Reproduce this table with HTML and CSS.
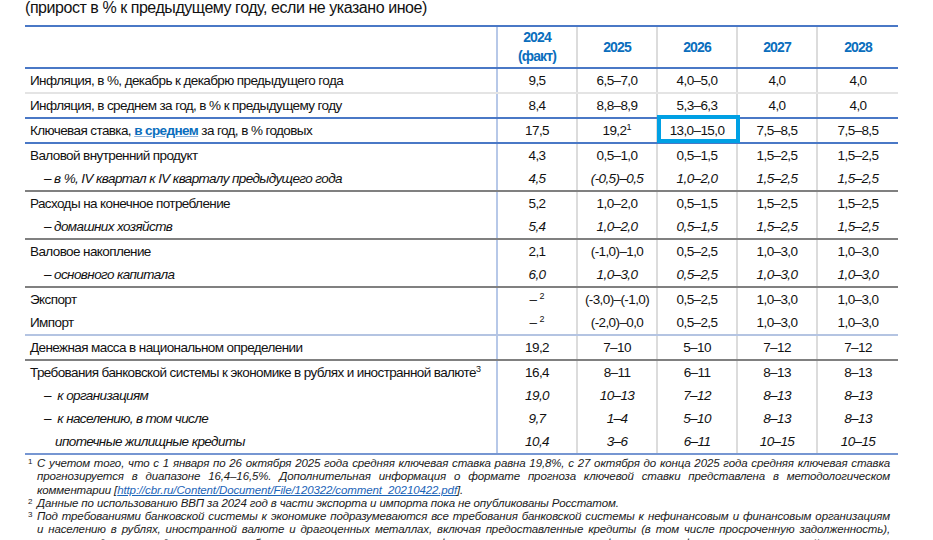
FILE: index.html
```html
<!DOCTYPE html>
<html lang="ru">
<head>
<meta charset="utf-8">
<title>Прогноз</title>
<link rel="stylesheet" href="styles.css">
</head>
<body>
<div class="page">
  <p class="title">(прирост в % к предыдущему году, если не указано иное)</p>
  <div class="table">
    <div class="row head b-blue">
      <div class="cell label"></div>
      <div class="cell year">2024<br>(факт)</div>
      <div class="cell year">2025</div>
      <div class="cell year">2026</div>
      <div class="cell year">2027</div>
      <div class="cell year">2028</div>
    </div>

    <div class="group b-light">
      <div class="row">
        <div class="cell label">Инфляция, в %, декабрь к декабрю предыдущего года</div>
        <div class="cell">9,5</div><div class="cell">6,5–7,0</div><div class="cell">4,0–5,0</div><div class="cell">4,0</div><div class="cell">4,0</div>
      </div>
    </div>

    <div class="group b-blue">
      <div class="row">
        <div class="cell label">Инфляция, в среднем за год, в % к предыдущему году</div>
        <div class="cell">8,4</div><div class="cell">8,8–8,9</div><div class="cell">5,3–6,3</div><div class="cell">4,0</div><div class="cell">4,0</div>
      </div>
    </div>

    <div class="group b-blue">
      <div class="row">
        <div class="cell label">Ключевая ставка, <a class="link" href="#">в среднем</a> за год, в % годовых</div>
        <div class="cell">17,5</div><div class="cell">19,2<sup>1</sup></div><div class="cell hl">13,0–15,0</div><div class="cell">7,5–8,5</div><div class="cell">7,5–8,5</div>
      </div>
    </div>

    <div class="group b-gray">
      <div class="row">
        <div class="cell label">Валовой внутренний продукт</div>
        <div class="cell">4,3</div><div class="cell">0,5–1,0</div><div class="cell">0,5–1,5</div><div class="cell">1,5–2,5</div><div class="cell">1,5–2,5</div>
      </div>
      <div class="row it">
        <div class="cell label sub">– в %, IV квартал к IV кварталу предыдущего года</div>
        <div class="cell">4,5</div><div class="cell">(-0,5)–0,5</div><div class="cell">1,0–2,0</div><div class="cell">1,5–2,5</div><div class="cell">1,5–2,5</div>
      </div>
    </div>

    <div class="group b-gray">
      <div class="row">
        <div class="cell label">Расходы на конечное потребление</div>
        <div class="cell">5,2</div><div class="cell">1,0–2,0</div><div class="cell">0,5–1,5</div><div class="cell">1,5–2,5</div><div class="cell">1,5–2,5</div>
      </div>
      <div class="row it">
        <div class="cell label sub">– домашних хозяйств</div>
        <div class="cell">5,4</div><div class="cell">1,0–2,0</div><div class="cell">0,5–1,5</div><div class="cell">1,5–2,5</div><div class="cell">1,5–2,5</div>
      </div>
    </div>

    <div class="group b-gray">
      <div class="row">
        <div class="cell label">Валовое накопление</div>
        <div class="cell">2,1</div><div class="cell">(-1,0)–1,0</div><div class="cell">0,5–2,5</div><div class="cell">1,0–3,0</div><div class="cell">1,0–3,0</div>
      </div>
      <div class="row it">
        <div class="cell label sub">– основного капитала</div>
        <div class="cell">6,0</div><div class="cell">1,0–3,0</div><div class="cell">0,5–2,5</div><div class="cell">1,0–3,0</div><div class="cell">1,0–3,0</div>
      </div>
    </div>

    <div class="group b-pale">
      <div class="row">
        <div class="cell label">Экспорт</div>
        <div class="cell">– <sup>2</sup></div><div class="cell">(-3,0)–(-1,0)</div><div class="cell">0,5–2,5</div><div class="cell">1,0–3,0</div><div class="cell">1,0–3,0</div>
      </div>
      <div class="row">
        <div class="cell label">Импорт</div>
        <div class="cell">– <sup>2</sup></div><div class="cell">(-2,0)–0,0</div><div class="cell">0,5–2,5</div><div class="cell">1,0–3,0</div><div class="cell">1,0–3,0</div>
      </div>
    </div>

    <div class="group b-gray">
      <div class="row">
        <div class="cell label">Денежная масса в национальном определении</div>
        <div class="cell">19,2</div><div class="cell">7–10</div><div class="cell">5–10</div><div class="cell">7–12</div><div class="cell">7–12</div>
      </div>
    </div>

    <div class="group b-mid">
      <div class="row">
        <div class="cell label">Требования банковской системы к экономике в рублях и иностранной валюте<sup>3</sup></div>
        <div class="cell">16,4</div><div class="cell">8–11</div><div class="cell">6–11</div><div class="cell">8–13</div><div class="cell">8–13</div>
      </div>
      <div class="row it">
        <div class="cell label sub">–&nbsp;&nbsp;к организациям</div>
        <div class="cell">19,0</div><div class="cell">10–13</div><div class="cell">7–12</div><div class="cell">8–13</div><div class="cell">8–13</div>
      </div>
      <div class="row it">
        <div class="cell label sub">–&nbsp;&nbsp;к населению, в том числе</div>
        <div class="cell">9,7</div><div class="cell">1–4</div><div class="cell">5–10</div><div class="cell">8–13</div><div class="cell">8–13</div>
      </div>
      <div class="row it">
        <div class="cell label sub2">ипотечные жилищные кредиты</div>
        <div class="cell">10,4</div><div class="cell">3–6</div><div class="cell">6–11</div><div class="cell">10–15</div><div class="cell">10–15</div>
      </div>
    </div>
  </div>

  <div class="notes">
    <div class="note">
      <span class="num">1</span>
      <p class="text">С учетом того, что с 1 января по 26 октября 2025 года средняя ключевая ставка равна 19,8%, с 27 октября до конца 2025 года средняя ключевая ставка прогнозируется в диапазоне 16,4–16,5%. Дополнительная информация о формате прогноза ключевой ставки представлена в методологическом комментарии [<a class="nlink" href="#">http://cbr.ru/Content/Document/File/120322/comment_20210422.pdf</a>].</p>
    </div>
    <div class="note">
      <span class="num">2</span>
      <p class="text">Данные по использованию ВВП за 2024 год в части экспорта и импорта пока не опубликованы Росстатом.</p>
    </div>
    <div class="note">
      <span class="num">3</span>
      <p class="text">Под требованиями банковской системы к экономике подразумеваются все требования банковской системы к нефинансовым и финансовым организациям и&nbsp;населению в рублях, иностранной валюте и драгоценных металлах, включая предоставленные кредиты (в том числе просроченную задолженность), вложения в долговые и долевые ценные бумаги и векселя, а также прочие формы участия в капитале нефинансовых и финансовых организаций.</p>
    </div>
  </div>
</div>
</body>
</html>
```

FILE: styles.css
```css
* { box-sizing: border-box; }

html, body {
  margin: 0;
  padding: 0;
  background: #ffffff;
}

body {
  font-family: "Liberation Sans", Arial, sans-serif;
  color: #111111;
  overflow: hidden;
}

.page {
  width: 933px;
  height: 540px;
  padding-left: 25px;
  overflow: hidden;
}

.title {
  margin: 0 0 9px 0;
  font-size: 16px;
  line-height: 16px;
  letter-spacing: -0.45px;
  color: #111111;
}

.table {
  width: 873px;
  border-top: 2px solid #4a78c6;
}

.row {
  display: grid;
  grid-template-columns: 473px repeat(5, 80px);
  height: 23px;
}

.row.head {
  height: 42px;
}

.cell {
  font-size: 13.5px;
  line-height: 23px;
  letter-spacing: -0.6px;
  text-align: center;
  white-space: nowrap;
  border-right: 2px solid #dcdcdc;
}

.cell:last-child {
  border-right: none;
}

.cell.label {
  text-align: left;
  padding-left: 5px;
  letter-spacing: -0.6px;
  border-right-color: #b7c8e8;
}

.cell.year {
  font-size: 14px;
  font-weight: bold;
  color: #0a6ebd;
  line-height: 19px;
  letter-spacing: -0.9px;
  display: flex;
  align-items: center;
  justify-content: center;
}

.it .cell {
  font-style: italic;
}

.cell.sub {
  padding-left: 19px;
}

.cell.sub2 {
  padding-left: 30px;
}

.link {
  color: #0a6ebd;
  font-weight: bold;
  text-decoration: underline;
  text-decoration-color: #8fb3dc;
}

sup {
  font-size: 9px;
  line-height: 0;
  vertical-align: 5px;
  letter-spacing: 0;
}

.hl {
  position: relative;
}

.hl::after {
  content: "";
  position: absolute;
  top: -4px;
  bottom: -1px;
  left: -1px;
  right: -4px;
  border: 4px solid #00a0e4;
}

.b-blue { border-bottom: 2px solid #4a78c6; }
.b-light { border-bottom: 2px solid #e4e4e4; }
.b-gray { border-bottom: 2px solid #808080; }
.b-pale { border-bottom: 2px solid #b4c4e2; }
.b-mid { border-bottom: 2px solid #7696d2; }

.notes {
  margin-top: 2px;
  width: 865px;
  font-size: 11.5px;
  line-height: 13.3px;
  letter-spacing: -0.12px;
  font-style: italic;
  color: #1a1a1a;
}

.note {
  display: flex;
}

.num {
  flex: 0 0 12px;
  padding-left: 3px;
  font-size: 8px;
  line-height: 10px;
  font-style: normal;
  letter-spacing: 0;
}

.text {
  margin: 0;
  flex: 1;
  text-align: justify;
}

.nlink {
  color: #1b64b8;
  text-decoration: underline;
}
```
